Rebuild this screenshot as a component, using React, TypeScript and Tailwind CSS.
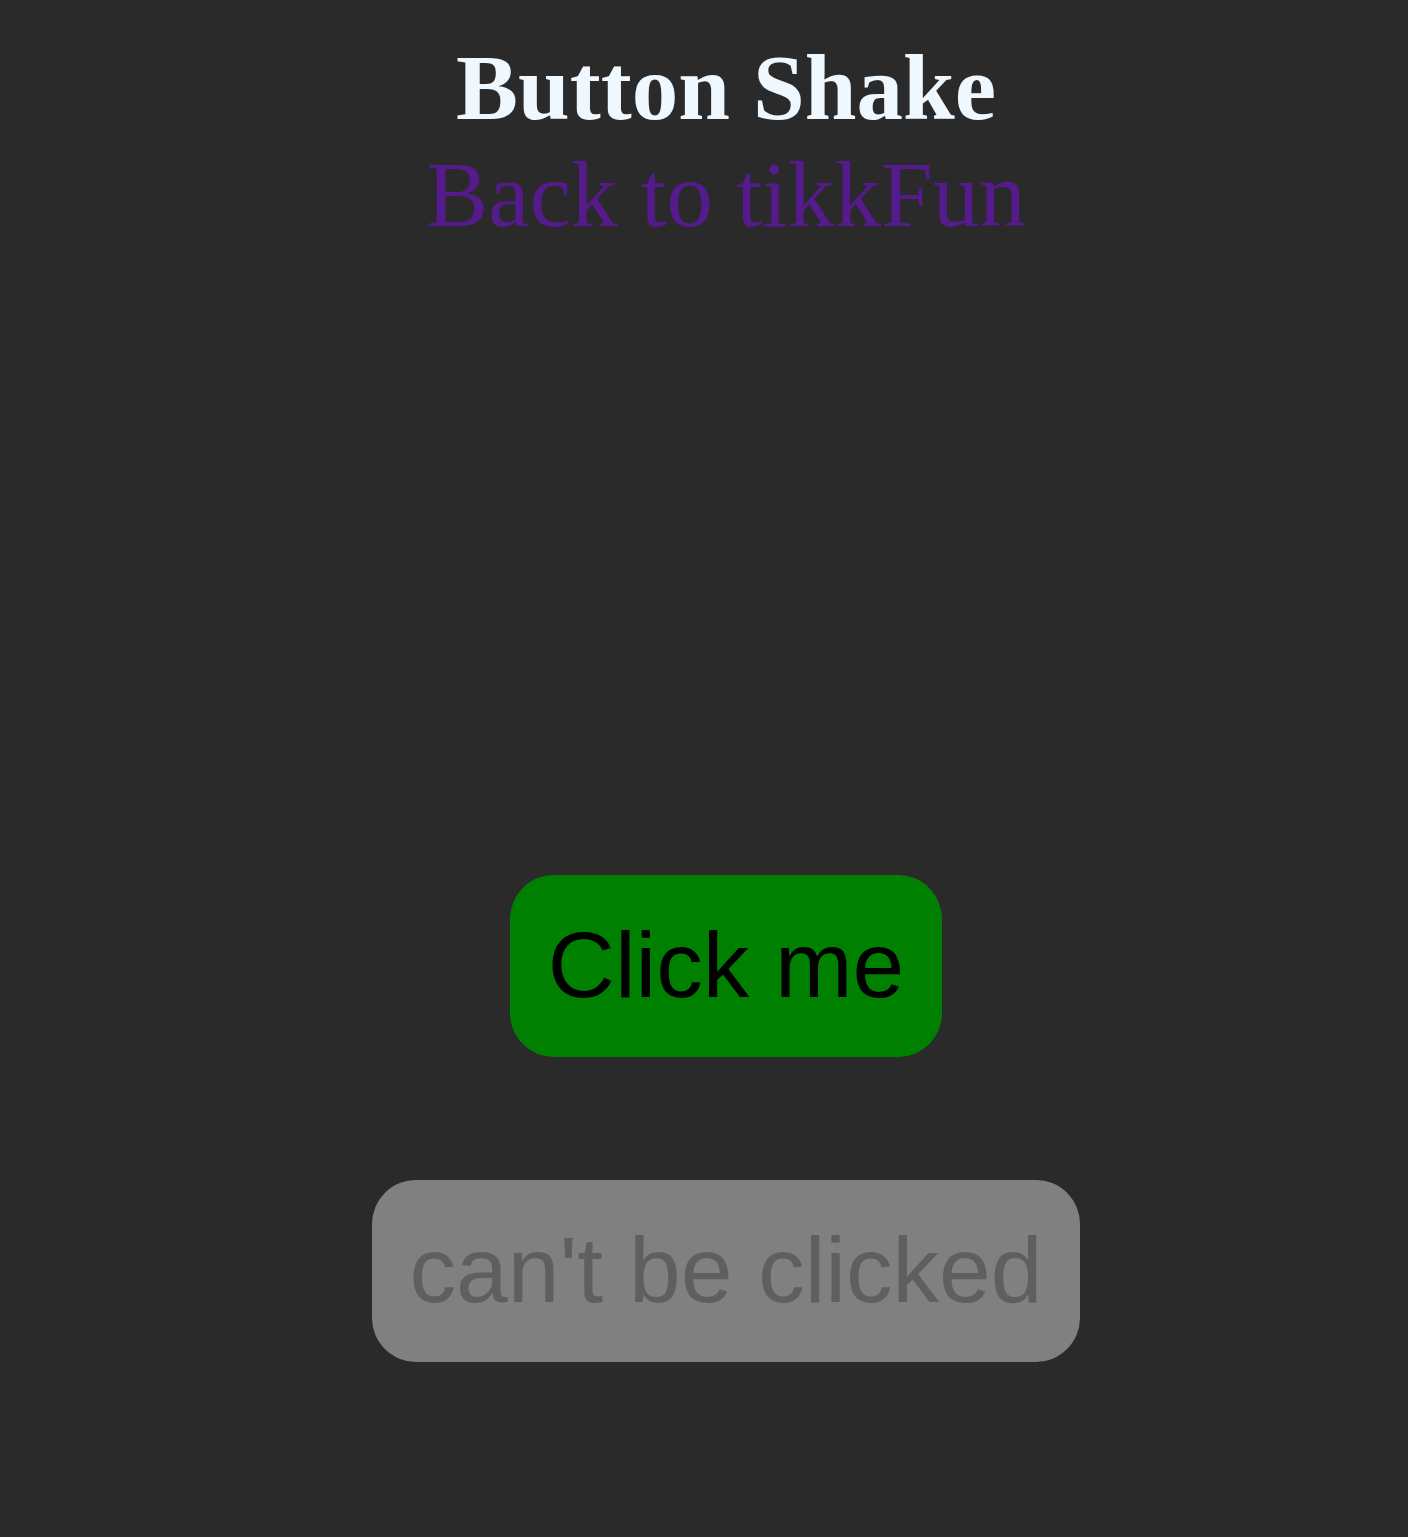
export default function App() {
  return (
    <div className="min-h-[1537px] w-full bg-[#2a2a2a] pl-[44px] pt-[35px]">
      {/* Header */}
      <div className="flex flex-col items-center">
        <h1 className="font-['Liberation_Serif',serif] text-[93px] font-bold leading-[1.15] text-[#f0f8ff]">
          Button Shake
        </h1>
        <a
          href="#"
          className="font-['Liberation_Serif',serif] text-[93px] leading-[1.15] text-[#551a8b]"
        >
          Back to tikkFun
        </a>
      </div>

      {/* Buttons */}
      <div className="mt-[626px] flex flex-col items-center gap-[123px]">
        <button className="flex h-[182px] w-[432px] items-center justify-center rounded-[44px] bg-[#008000] font-['Liberation_Sans',sans-serif] text-[93px] text-black">
          Click me
        </button>
        <button
          disabled
          className="flex h-[182px] w-[708px] items-center justify-center whitespace-nowrap rounded-[44px] bg-[#808080] font-['Liberation_Sans',sans-serif] text-[93px] text-[#5f5f5f]"
        >
          can't be clicked
        </button>
      </div>
    </div>
  )
}
